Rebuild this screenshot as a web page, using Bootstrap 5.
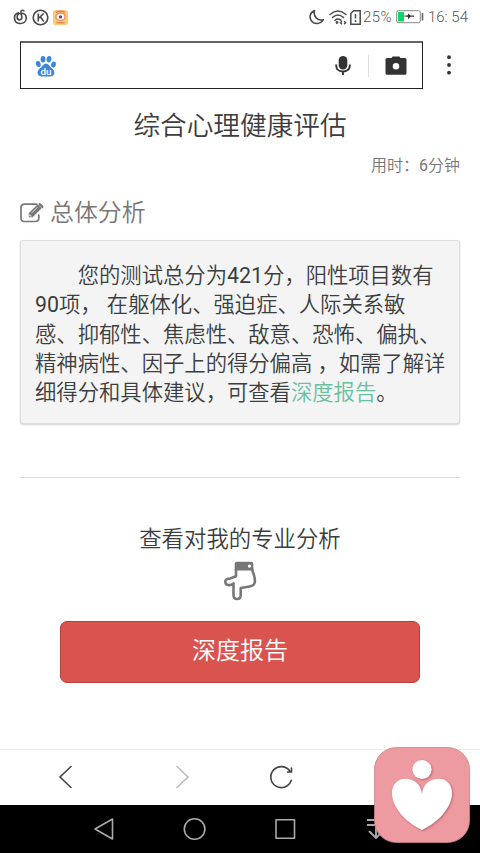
<!DOCTYPE html>
<html lang="zh-CN">
<head>
<meta charset="utf-8">
<meta name="viewport" content="width=device-width, initial-scale=1">
<title>综合心理健康评估</title>
<link href="https://cdn.jsdelivr.net/npm/bootstrap@5.3.0/dist/css/bootstrap.min.css" rel="stylesheet">
<style>
body{font-family:Roboto,"Noto Sans CJK SC",sans-serif;font-weight:350;color:#3b3d3f;height:853px;overflow:hidden;background:#fff}
svg{display:block;flex:none}
.status{height:34px;padding:0 12px 0 13px;color:#555}
.status-text{font-size:15px;font-weight:300;line-height:34px;white-space:nowrap}
.charge{letter-spacing:.4px;margin-left:2px}
.search-row{height:48px;margin-top:7px;padding-left:20px}
.search-box{width:403px;height:48px;border:1.5px solid #222;border-top:2px solid #666;padding:0 15px 0 14px}
.split{width:1px;height:22px;background:#ddd;margin:0 16px 0 17px}
.title{font-size:26.67px;line-height:36px;margin:19px 0 0;font-weight:350}
.time{font-size:16px;line-height:24px;margin:10px 20px 0;color:#777}
.section-title{font-size:23.9px;line-height:32px;margin:19px 20px 0;color:#777;font-weight:350}
.report{margin:11px 20px 0;height:184px;background:#f4f4f4;border:1px solid #dcdcdc;border-radius:3px;box-shadow:0 1px 2px rgba(0,0,0,.18);padding:20px 14px;font-size:21.33px;line-height:29.33px;white-space:nowrap}
.indent{padding-left:42.7px}
.report a{color:#6abf9f}
.rule{margin:53px 20px 0;border-top:1px solid #ddd}
.prompt{font-size:22.4px;line-height:32px;margin-top:45px}
.btn-report{--bs-btn-bg:#d9534f;--bs-btn-color:#fff;--bs-btn-border-color:#b9403d;--bs-btn-hover-bg:#c9433f;--bs-btn-hover-color:#fff;width:360px;height:62px;margin-top:20px;font-size:24px;font-weight:350;border-radius:7px;padding:0 0 2px}
.browser-nav{height:56px;border-top:1px solid #eee;padding:0 0 2px 56px}
.system-nav{height:48px;background:#000;padding-left:92px}
.float-badge{right:10px;bottom:10px;width:96px;height:96px}
</style>
</head>
<body class="d-flex flex-column position-relative">
<header class="status d-flex align-items-center">
  <svg width="15" height="16" viewBox="0 0 15 16" fill="none" stroke="#484848" stroke-width="1.6" stroke-linecap="round"><path d="M5.5 3.8C2.5 4.8 1.3 7 1.5 9.5c.3 3.2 2.8 5 5.8 5 3.6 0 6-2.400 6-5.500 0-3-2.300-4.800-5.200-4.800-2.700 0-4.100 2-4 4.200.1 1.500 1.100 2.500 2.500 2.500 1.600 0 2.500-1.200 2.200-2.700L7.900 3.300C7.600 1.500 9.500.7 11 1.800"/></svg>
  <svg class="ms-1" width="17" height="17" viewBox="0 0 17 17" fill="none" stroke="#484848" stroke-width="1.6"><circle cx="8.500" cy="8.500" r="7.300"/><path d="M6.300 4.500v8M11.600 4.500 7 9M8.300 7.800l3.500 4.700"/></svg>
  <svg class="ms-1" width="15" height="15" viewBox="0 0 15 15"><rect width="15" height="15" rx="2.500" fill="#f7cf72"/><ellipse cx="7.500" cy="6.700" rx="4.600" ry="3.700" fill="#fff" stroke="#e98a66" stroke-width="1.400"/><circle cx="7.500" cy="6.900" r="1.700" fill="#6c4550"/><path d="M3 2.500Q7.500-.5 12 2.500M3.500 12.700h8" fill="none" stroke="#e97a55" stroke-width="1.300"/></svg>
  <svg class="ms-auto" width="16" height="16" viewBox="0 0 16 16" fill="none" stroke="#4a4a4a" stroke-width="1.600" stroke-linejoin="round"><path d="M5.500 1.500C.8 3.500.1 8.200 2.300 11.600c2.800 4.200 9.200 3.900 12-.9C8.500 12 4 7.500 5.500 1.500Z"/></svg>
  <svg class="ms-1" width="18" height="16" viewBox="0 0 18 16" fill="none" stroke="#4a4a4a" stroke-width="1.500" stroke-linecap="round"><path d="M1 5.500Q9-1.500 17 5.500M3.500 8.500Q9 3.500 14.500 8.500M6 11.300q3-2.500 6 0"/><circle cx="8" cy="13.500" r=".7"/><path d="m12.500 12.700-1 1 1 1M15.500 12.700l1 1-1 1"/></svg>
  <svg style="margin-left:3px" width="11" height="15" viewBox="0 0 11 15" fill="none" stroke="#4a4a4a" stroke-width="1.500"><path d="M3.500.8h6.700v13.400H.8V3.500ZM5.500 4v4.500M5.500 10v2"/></svg>
  <span class="status-text charge">25%</span>
  <svg class="ms-1" width="28" height="14" viewBox="0 0 28 14"><rect x=".7" y=".7" width="23.600" height="12" rx="1.700" fill="#fff" stroke="#888"/><path d="M2 2h6v9.500H2Z" fill="#10d36a"/><path d="M6.500 6 12 5.300V3.500l2.500 1.900H18v1.400h-3.500L12 9.200V7Z" fill="#333"/><path d="M26.500 3v7.500" stroke="#666" stroke-width="1.600"/></svg>
  <span class="status-text ms-1">16: 54</span>
</header>

<div class="search-row d-flex align-items-center">
  <div class="search-box d-flex align-items-center">
    <svg width="22" height="22" viewBox="0 0 22 22" fill="#3d86dc"><ellipse cx="3.300" cy="9" rx="2.400" ry="3.100" transform="rotate(-15 3.300 9)"/><ellipse cx="8" cy="4.200" rx="2.400" ry="3.300"/><ellipse cx="14" cy="4.200" rx="2.400" ry="3.300" transform="rotate(8 14 4.200)"/><ellipse cx="18.500" cy="9.500" rx="2.400" ry="3.100" transform="rotate(12 18.500 9.500)"/><path d="M11 8.700c2.900 0 3.600 2.600 5.600 4.300 2.200 1.700 3.300 3.400 2.600 5.900-.8 2.900-4.200 2.600-8.200 2.500-4 .1-7.400.4-8.200-2.500-.7-2.500.4-4.200 2.600-5.900C7.400 11.300 8.100 8.700 11 8.700Z"/><text x="5.400" y="19.500" font-family="Roboto,sans-serif" font-weight="500" font-size="9.800" fill="#fff">du</text></svg>
    <svg class="ms-auto" width="16" height="20" viewBox="0 0 16 20"><rect x="3.700" y="0" width="8.600" height="13.500" rx="4.300" fill="#333"/><path d="M1.200 8.500v1.200c0 7.800 13.600 7.800 13.600 0V8.500M8 15.500V19" fill="none" stroke="#333" stroke-width="1.900"/></svg>
    <span class="split"></span>
    <svg width="22" height="19" viewBox="0 0 22 19"><path fill="#333" fill-rule="evenodd" d="M6.500 2 7.600.4h6.800L15.500 2H20q1.500 0 1.500 1.500v13.700q0 1.500-1.500 1.500H2q-1.500 0-1.500-1.500V3.500Q.5 2 2 2ZM11 7a3.300 3.300 0 1 0 0 6.600A3.300 3.300 0 1 0 11 7Z"/></svg>
  </div>
  <svg class="ms-4" width="6" height="20" viewBox="1 0 6 20" fill="#333"><circle cx="3" cy="2.200" r="1.900"/><circle cx="3" cy="10" r="1.900"/><circle cx="3" cy="17.700" r="1.900"/></svg>
</div>

<main class="flex-grow-1">
  <h1 class="title text-center">综合心理健康评估</h1>
  <div class="time text-end">用时：<span class="fw-normal">6</span>分钟</div>
  <h2 class="section-title d-flex align-items-center">
    <svg width="25" height="21" viewBox="0 0 25 21"><path d="M16.500 1.200H4.500Q1 1.200 1 4.700v10.300Q1 18.500 4.500 18.500h10.800q3.500 0 3.500-3.500v-3" fill="none" stroke="#777" stroke-width="1.700" stroke-linecap="round"/><path d="m8.700 10.300 9-9 3.900 3.900-9 9H8.700Zm10-9.900q1-.9 2 0l2.400 2.300q.9 1 0 2l-.8.700-3.900-3.900Z" fill="#777"/><path d="m11.800 9.900 5.700-5.700M9.800 11.100v1.900h1.900" fill="none" stroke="#fff" stroke-width=".8"/></svg>
    <span style="margin-left:5px">总体分析</span>
  </h2>
  <section class="report">
    <div class="indent">您的测试总分为<span class="fw-normal">421</span>分，阳性项目数有</div>
    <div><span class="fw-normal">90</span>项， 在躯体化、强迫症、人际关系敏</div>
    <div>感、抑郁性、焦虑性、敌意、恐怖、偏执、</div>
    <div>精神病性、因子上的得分偏高 ，如需了解详</div>
    <div>细得分和具体建议，可查看<a href="#report" class="text-decoration-none">深度报告</a>。</div>
  </section>
  <div class="rule"></div>
  <div class="d-flex flex-column align-items-center">
    <div class="prompt">查看对我的专业分析</div>
    <svg width="34" height="40" viewBox="0 0 34 40" style="margin-top:6px"><path d="M13 8v7.200L7.200 17.500Q2.300 17.700 2.300 20.500q0 3.600 4 3.600 2.600 0 4.200-1.600V34q0 4 3.600 4t3.600-4v-7l8.800-1.500q5-.8 5.300-4.500.3-3-.6-6L29 8" fill="none" stroke="#777" stroke-width="2.600" stroke-linejoin="round"/><path fill="#777" fill-rule="evenodd" d="M13.700.7h14.600q2 0 2 2V9.400H11.700V2.700q0-2 2-2Zm12.800 2.700a1.700 1.700 0 1 0 0 3.400 1.700 1.700 0 0 0 0-3.400Z"/></svg>
    <button class="btn btn-report" type="button">深度报告</button>
  </div>
</main>

<nav class="browser-nav d-flex align-items-center">
  <svg width="270" height="30" viewBox="0 0 270 30" fill="none" stroke="#444" stroke-width="1.600" stroke-linecap="round"><path d="M15 4.500 4 15l11 10.500"/><path stroke="#bbb" d="m121 4.500 11 10.500-11 10.500"/><path d="M235.300 18.300A10.500 10.500 0 1 1 234 9.200M235.500 6v4H231.500"/></svg>
</nav>
<footer class="system-nav d-flex align-items-center">
  <svg width="300" height="28" viewBox="0 0 300 28" fill="none" stroke="#aaa" stroke-width="1.600" stroke-linejoin="round"><path d="M20.500 4v20L3 14Z"/><circle cx="102.600" cy="14" r="10.300"/><rect x="184" y="4.700" width="18.500" height="18.500"/><path d="M275 5h18M275 10h18M284 12v11M277 16l7 7 7-7" stroke-width="1.900"/></svg>
</footer>

<div class="float-badge position-absolute">
  <svg width="96" height="96" viewBox="0 0 96 96"><rect x=".5" y=".5" width="95" height="95" rx="22" fill="#ed9aa0" stroke="#c68489" stroke-width=".8"/><g style="filter:drop-shadow(1px 1px 1px rgba(130,60,70,.5))" fill="#fff"><circle cx="48" cy="22.500" r="9.600"/><path d="M48 47C47 37 40 31.700 31.500 31.700 23 31.700 18 38 18 46c0 14 12.500 28.500 30 37 17.500-8.500 30-23 30-37 0-8-5-14.300-13.500-14.300C56 31.700 49 37 48 47Z"/></g></svg>
</div>
<script src="https://cdn.jsdelivr.net/npm/bootstrap@5.3.0/dist/js/bootstrap.bundle.min.js"></script>
</body>
</html>
